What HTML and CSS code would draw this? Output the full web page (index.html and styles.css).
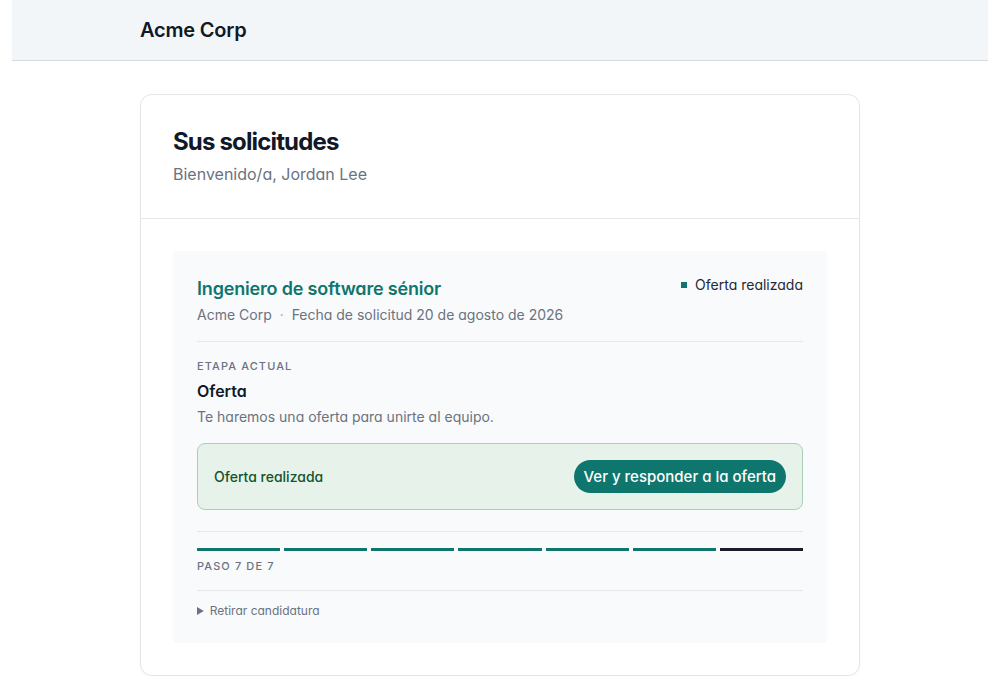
FILE: index.html
```html
<!DOCTYPE html>
<html lang="es">
<head>
    <meta charset="UTF-8">
    <meta name="viewport" content="width=device-width, initial-scale=1.0">
    <title>Sus solicitudes</title>
    <link rel="stylesheet" href="styles.css">
</head>
<body>
<header class="topbar">
    <div class="topbar-inner">Acme Corp</div>
</header>

<main class="container">
    <section class="card">
        <div class="card-header">
            <h1 class="page-title">Sus solicitudes</h1>
            <p class="welcome">Bienvenido/a, Jordan Lee</p>
        </div>

        <div class="card-body">
            <article class="application">
                <div class="app-top">
                    <div>
                        <h2 class="job-title">Ingeniero de software sénior</h2>
                        <p class="job-meta">Acme Corp <span class="dot">·</span> Fecha de solicitud 20 de agosto de 2026</p>
                    </div>
                    <span class="status"><span class="status-mark"></span>Oferta realizada</span>
                </div>

                <div class="stage">
                    <div class="label">Etapa actual</div>
                    <h3 class="stage-name">Oferta</h3>
                    <p class="stage-desc">Te haremos una oferta para unirte al equipo.</p>

                    <div class="offer-box">
                        <span class="offer-text">Oferta realizada</span>
                        <button class="offer-btn">Ver y responder a la oferta</button>
                    </div>
                </div>

                <div class="progress">
                    <div class="steps">
                        <span class="step done"></span>
                        <span class="step done"></span>
                        <span class="step done"></span>
                        <span class="step done"></span>
                        <span class="step done"></span>
                        <span class="step done"></span>
                        <span class="step current"></span>
                    </div>
                    <div class="label step-label">Paso 7 de 7</div>
                </div>

                <details class="withdraw">
                    <summary>Retirar candidatura</summary>
                </details>
            </article>
        </div>
    </section>
</main>
</body>
</html>
```

FILE: styles.css
```css
* {
    box-sizing: border-box;
}

body {
    margin: 0;
    padding: 0 12px;
    font-family: Inter, "Noto Sans", sans-serif;
    font-feature-settings: "cv11";
    color: #111827;
    background: #fff;
}

h1, h2, h3, p {
    margin: 0;
}

.topbar {
    background: #f3f6f8;
    border-bottom: 1px solid #d7dbe0;
    height: 61px;
}

.topbar-inner {
    max-width: 720px;
    margin: 0 auto;
    line-height: 60px;
    font-size: 20px;
    font-weight: 600;
    letter-spacing: -0.01em;
    color: #111827;
}

.container {
    max-width: 720px;
    margin: 33px auto 0;
}

.card {
    border: 1px solid #e3e5e9;
    border-radius: 12px;
    background: #fff;
    box-shadow: 0 1px 2px rgba(0, 0, 0, 0.03);
}

.card-header {
    padding: 32px 32px 32px;
    border-bottom: 1px solid #e5e7eb;
}

.page-title {
    font-size: 24px;
    line-height: 30px;
    font-weight: 700;
    letter-spacing: -0.035em;
    color: #111827;
}

.welcome {
    margin-top: 5px;
    font-size: 16px;
    line-height: 24px;
    color: #6b7280;
}

.card-body {
    padding: 32px;
}

.application {
    background: #f8fafc;
    border-radius: 4px;
    padding: 24px 24px 24px;
}

.app-top {
    display: flex;
    justify-content: space-between;
    align-items: flex-start;
    padding-bottom: 16px;
    border-bottom: 1px solid #e5e7eb;
}

.job-title {
    font-size: 18px;
    line-height: 28px;
    font-weight: 600;
    letter-spacing: -0.01em;
    color: #0f766e;
}

.job-meta {
    margin-top: 2px;
    font-size: 14px;
    line-height: 20px;
    color: #6b7280;
}

.dot {
    margin: 0 4px;
    color: #9ca3af;
}

.status {
    display: flex;
    align-items: center;
    gap: 8px;
    font-size: 14px;
    line-height: 20px;
    color: #1f2937;
}

.status-mark {
    width: 6px;
    height: 6px;
    background: #0f766e;
}

.stage {
    padding-top: 16px;
}

.label {
    font-size: 11px;
    line-height: 16px;
    font-weight: 500;
    letter-spacing: 0.1em;
    text-transform: uppercase;
    color: #6b7280;
}

.stage-name {
    margin-top: 5px;
    font-size: 16px;
    line-height: 24px;
    font-weight: 600;
    color: #111827;
}

.stage-desc {
    margin-top: 4px;
    font-size: 14px;
    line-height: 20px;
    color: #6b7280;
}

.offer-box {
    margin-top: 16px;
    display: flex;
    justify-content: space-between;
    align-items: center;
    padding: 16px;
    background: #e7f3ea;
    border: 1px solid #a9cfb6;
    border-radius: 8px;
}

.offer-text {
    font-size: 14px;
    font-weight: 500;
    color: #14532d;
}

.offer-btn {
    font-family: inherit;
    font-feature-settings: "cv11";
    font-size: 15px;
    line-height: 21px;
    font-weight: 500;
    padding: 6px 10px;
    border: none;
    border-radius: 999px;
    background: #0f766e;
    color: #fff;
    cursor: pointer;
}

.progress {
    margin-top: 21px;
    padding: 16px 0 16px;
    border-top: 1px solid #e5e7eb;
    border-bottom: 1px solid #e5e7eb;
}

.steps {
    display: flex;
    gap: 4px;
}

.step {
    flex: 1;
    height: 3px;
    background: #e5e7eb;
}

.step.done {
    background: #0f766e;
}

.step.current {
    background: #1c1b29;
}

.step-label {
    margin-top: 7px;
}

.withdraw {
    padding-top: 12px;
    font-size: 12px;
    line-height: 16px;
    color: #6b7280;
}

.withdraw summary {
    cursor: pointer;
}
```
